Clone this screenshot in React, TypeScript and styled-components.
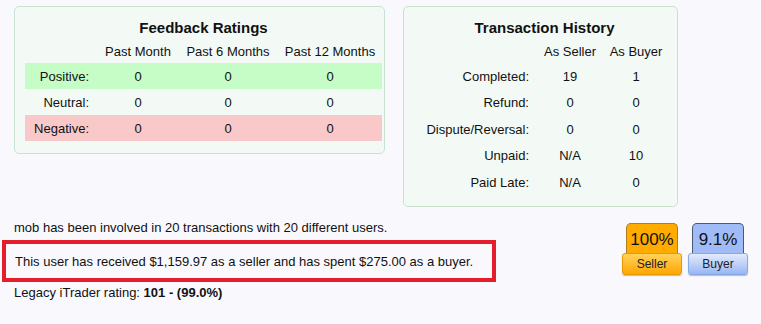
import React from 'react';
import styled, { createGlobalStyle } from 'styled-components';

const GlobalStyle = createGlobalStyle`
  html, body {
    margin: 0;
    padding: 0;
    background: #f9f9fd;
  }
  body {
    font-family: "Liberation Sans", Arial, sans-serif;
    font-size: 13px;
    color: #111;
  }
`;

const Page = styled.div`
  width: 761px;
  height: 324px;
  padding: 6px 0 0 14px;
  box-sizing: border-box;
`;

const TopRow = styled.div`
  display: flex;
  align-items: flex-start;
  gap: 18px;
`;

const Panel = styled.div<{ $w: number; $h: number }>`
  width: ${(p) => p.$w}px;
  height: ${(p) => p.$h}px;
  box-sizing: border-box;
  border: 1px solid #c9e2cd;
  border-radius: 5px;
  background: #f3faf6;
  padding: 12px 2px 0 10px;
`;

const PanelTitle = styled.div`
  font-weight: bold;
  font-size: 15px;
  text-align: center;
  line-height: 18px;
  height: 20px;
`;

const Table = styled.table`
  border-collapse: collapse;
  table-layout: fixed;
`;

const HeadCell = styled.th<{ $w: number }>`
  width: ${(p) => p.$w}px;
  font-weight: normal;
  text-align: center;
  height: 24px;
  padding: 0;
  white-space: nowrap;
`;

const Row = styled.tr<{ $tone?: 'good' | 'bad' }>`
  background: ${(p) =>
    p.$tone === 'good' ? '#c6fcc6' : p.$tone === 'bad' ? '#f9c8c8' : 'transparent'};
`;

const Label = styled.td<{ $h: number }>`
  text-align: right;
  padding: 0 9px 0 0;
  height: ${(p) => p.$h}px;
  white-space: nowrap;
`;

const Cell = styled.td`
  text-align: center;
  padding: 0;
`;

const Bottom = styled.div`
  display: flex;
  align-items: flex-start;
  margin-top: 12px;
`;

const Lines = styled.div`
  flex: 1;
`;

const Line = styled.div`
  line-height: 18px;
`;

const Highlight = styled.div`
  margin: 3px 0 2px -12px;
  width: 494px;
  height: 42px;
  box-sizing: border-box;
  border: 4px solid #e41e2a;
  padding: 0 0 0 9px;
  display: flex;
  align-items: center;
`;

const Badges = styled.div`
  display: flex;
  gap: 6px;
  margin: 4px 13px 0 0;
`;

const Badge = styled.div`
  width: 60px;
  display: flex;
  flex-direction: column;
  align-items: center;
`;

const BadgeTop = styled.div<{ $bg: string; $edge: string }>`
  width: 52px;
  height: 30px;
  box-sizing: border-box;
  background: ${(p) => p.$bg};
  border: 1px solid ${(p) => p.$edge};
  border-bottom: none;
  border-radius: 5px 5px 0 0;
  font-size: 17px;
  display: flex;
  align-items: center;
  justify-content: center;
  padding-top: 3px;
`;

const BadgeLabel = styled.div<{ $from: string; $to: string; $edge: string }>`
  width: 60px;
  height: 22px;
  box-sizing: border-box;
  background: linear-gradient(to bottom, ${(p) => p.$from}, ${(p) => p.$to});
  border: 1px solid ${(p) => p.$edge};
  border-radius: 3px;
  font-size: 12px;
  color: #222;
  display: flex;
  align-items: center;
  justify-content: center;
  box-shadow: 0 1px 1px rgba(0, 0, 0, 0.25);
`;

const feedback = [
  { label: 'Positive:', tone: 'good' as const, v: ['0', '0', '0'] },
  { label: 'Neutral:', tone: undefined, v: ['0', '0', '0'] },
  { label: 'Negative:', tone: 'bad' as const, v: ['0', '0', '0'] },
];

const history = [
  ['Completed:', '19', '1'],
  ['Refund:', '0', '0'],
  ['Dispute/Reversal:', '0', '0'],
  ['Unpaid:', 'N/A', '10'],
  ['Paid Late:', 'N/A', '0'],
];

export default function App() {
  return (
    <>
      <GlobalStyle />
      <Page>
        <TopRow>
          <Panel $w={371} $h={148}>
            <PanelTitle>Feedback Ratings</PanelTitle>
            <Table>
              <thead>
                <tr>
                  <HeadCell $w={73} />
                  <HeadCell $w={80}>Past Month</HeadCell>
                  <HeadCell $w={100}>Past 6 Months</HeadCell>
                  <HeadCell $w={104}>Past 12 Months</HeadCell>
                </tr>
              </thead>
              <tbody>
                {feedback.map((r) => (
                  <Row key={r.label} $tone={r.tone}>
                    <Label $h={26}>{r.label}</Label>
                    {r.v.map((x, i) => (
                      <Cell key={i}>{x}</Cell>
                    ))}
                  </Row>
                ))}
              </tbody>
            </Table>
          </Panel>
          <Panel $w={275} $h={201}>
            <PanelTitle>Transaction History</PanelTitle>
            <Table>
              <thead>
                <tr>
                  <HeadCell $w={124} />
                  <HeadCell $w={64}>As Seller</HeadCell>
                  <HeadCell $w={68}>As Buyer</HeadCell>
                </tr>
              </thead>
              <tbody>
                {history.map(([l, s, b]) => (
                  <Row key={l}>
                    <Label $h={26.5}>{l}</Label>
                    <Cell>{s}</Cell>
                    <Cell>{b}</Cell>
                  </Row>
                ))}
              </tbody>
            </Table>
          </Panel>
        </TopRow>
        <Bottom>
          <Lines>
            <Line>mob has been involved in 20 transactions with 20 different users.</Line>
            <Highlight>
              This user has received $1,159.97 as a seller and has spent $275.00 as a buyer.
            </Highlight>
            <Line>
              Legacy iTrader rating: <b>101 - (99.0%)</b>
            </Line>
          </Lines>
          <Badges>
            <Badge>
              <BadgeTop $bg="#ffab00" $edge="#b07f1c">100%</BadgeTop>
              <BadgeLabel $from="#ffd35c" $to="#ffa600" $edge="#e59a00">
                Seller
              </BadgeLabel>
            </Badge>
            <Badge>
              <BadgeTop $bg="#9fbcf8" $edge="#4d5a6e">9.1%</BadgeTop>
              <BadgeLabel $from="#e3ebfc" $to="#98b6f4" $edge="#8aa8e6">
                Buyer
              </BadgeLabel>
            </Badge>
          </Badges>
        </Bottom>
      </Page>
    </>
  );
}
